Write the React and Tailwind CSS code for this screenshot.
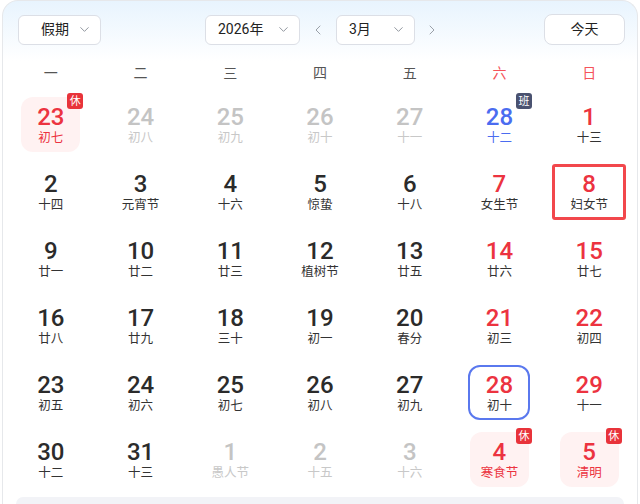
import { ChevronDown, ChevronLeft, ChevronRight } from "lucide-react";

const weekdays = ["一", "二", "三", "四", "五", "六", "日"];

// kind: holiday | work | today | selected
const days = [
  { d: 23, l: "初七", kind: "holiday", other: true },
  { d: 24, l: "初八", other: true },
  { d: 25, l: "初九", other: true },
  { d: 26, l: "初十", other: true },
  { d: 27, l: "十一", other: true },
  { d: 28, l: "十二", kind: "work", other: true },
  { d: 1, l: "十三" },
  { d: 2, l: "十四" },
  { d: 3, l: "元宵节" },
  { d: 4, l: "十六" },
  { d: 5, l: "惊蛰" },
  { d: 6, l: "十八" },
  { d: 7, l: "女生节" },
  { d: 8, l: "妇女节", kind: "selected" },
  { d: 9, l: "廿一" },
  { d: 10, l: "廿二" },
  { d: 11, l: "廿三" },
  { d: 12, l: "植树节" },
  { d: 13, l: "廿五" },
  { d: 14, l: "廿六" },
  { d: 15, l: "廿七" },
  { d: 16, l: "廿八" },
  { d: 17, l: "廿九" },
  { d: 18, l: "三十" },
  { d: 19, l: "初一" },
  { d: 20, l: "春分" },
  { d: 21, l: "初三" },
  { d: 22, l: "初四" },
  { d: 23, l: "初五" },
  { d: 24, l: "初六" },
  { d: 25, l: "初七" },
  { d: 26, l: "初八" },
  { d: 27, l: "初九" },
  { d: 28, l: "初十", kind: "today" },
  { d: 29, l: "十一" },
  { d: 30, l: "十二" },
  { d: 31, l: "十三" },
  { d: 1, l: "愚人节", other: true },
  { d: 2, l: "十五", other: true },
  { d: 3, l: "十六", other: true },
  { d: 4, l: "寒食节", kind: "holiday", other: true },
  { d: 5, l: "清明", kind: "holiday", other: true },
];

const Select = ({ label, width, textClass }) => (
  <div
    className={`h-[30px] ${width} flex items-center justify-between bg-white border border-[#dcdfe6] rounded-md text-[14px] text-[#222] ${textClass}`}
  >
    <span>{label}</span>
    <ChevronDown size={15} strokeWidth={1.5} className="text-[#8a8f99]" />
  </div>
);

const Badge = ({ text, dark }) => (
  <span
    className={`absolute top-[-4px] right-[-3px] w-4 h-4 rounded-[3px] flex items-center justify-center text-[11px] leading-none text-white ${
      dark ? "bg-[#4a5270]" : "bg-[#e8333a]"
    }`}
  >
    {text}
  </span>
);

const DayCell = ({ day, col }) => {
  const weekend = col >= 5;
  let numColor = "text-[#2b2b2b]";
  let lunarColor = "text-[#333]";
  if (day.other) {
    numColor = "text-[#c4c4c4]";
    lunarColor = "text-[#c8c8c8]";
  } else if (weekend || day.kind === "today") {
    numColor = "text-[#ec3340]";
  }
  if (day.kind === "holiday") {
    numColor = "text-[#ec3340]";
    lunarColor = "text-[#ec3340]";
  }
  if (day.kind === "work") {
    numColor = "text-[#4b6cf0]";
    lunarColor = "text-[#4b6cf0]";
  }
  if (day.kind === "selected") {
    numColor = "text-[#ec3340]";
  }

  let box = "w-[59px] h-[55px] rounded-xl";
  if (day.kind === "holiday") box += " bg-[#fff2f2]";
  if (day.kind === "today")
    box = "w-[62px] h-[55px] rounded-xl border-2 border-[#5a78ee]";
  if (day.kind === "selected")
    box = "w-[74px] h-[56px] rounded-[3px] border-[3px] border-[#f2474c]";

  return (
    <div className="h-[67px] flex items-center justify-center">
      <div className={`relative flex flex-col items-center justify-center ${box}`}>
        <span className={`text-[24px] font-medium leading-[26px] ${numColor}`}>
          {day.d}
        </span>
        <span className={`text-[12.5px] leading-[16px] ${lunarColor}`}>
          {day.l}
        </span>
        {day.kind === "holiday" && <Badge text="休" />}
        {day.kind === "work" && <Badge text="班" dark />}
      </div>
    </div>
  );
};

const App = () => {
  return (
    <div
      className="w-[640px] h-[504px] overflow-hidden bg-white px-[2px]"
      style={{ fontFamily: 'Roboto, "Noto Sans CJK SC", sans-serif' }}
    >
      <div className="h-full border-x border-t border-[#e6e8eb] rounded-t-2xl bg-gradient-to-b from-[#e8f4fe] via-white via-[60px] to-white flex flex-col">
        <div className="flex items-center justify-between pl-[15px] pr-[12px] pt-[13px]">
          <Select label="假期" width="w-[83px]" textClass="pl-[22px] pr-[8px]" />
          <div className="flex items-center">
            <Select label="2026年" width="w-[95px]" textClass="pl-[12px] pr-[8px]" />
            <ChevronLeft size={16} strokeWidth={1.5} className="text-[#9aa0a8] mx-[10px]" />
            <Select label="3月" width="w-[79px]" textClass="pl-[12px] pr-[8px]" />
            <ChevronRight size={16} strokeWidth={1.5} className="text-[#9aa0a8] ml-[9px]" />
          </div>
          <div className="h-[31px] w-[81px] flex items-center justify-center bg-white border border-[#dcdfe6] rounded-lg text-[14px] text-[#222]">
            今天
          </div>
        </div>

        <div className="grid grid-cols-7 px-[3px] mt-[14px] h-[28px] items-center">
          {weekdays.map((w, i) => (
            <div
              key={w}
              className={`text-center text-[14px] ${i >= 5 ? "text-[#f5535a]" : "text-[#555]"}`}
            >
              {w}
            </div>
          ))}
        </div>

        <div className="grid grid-cols-7 px-[3px] mt-[4px]">
          {days.map((day, i) => (
            <DayCell key={i} day={day} col={i % 7} />
          ))}
        </div>

        <div className="mt-[4px] mx-[13px] flex-1 bg-[#f2f3f7] rounded-t-xl" />
      </div>
    </div>
  );
};

export default App;
